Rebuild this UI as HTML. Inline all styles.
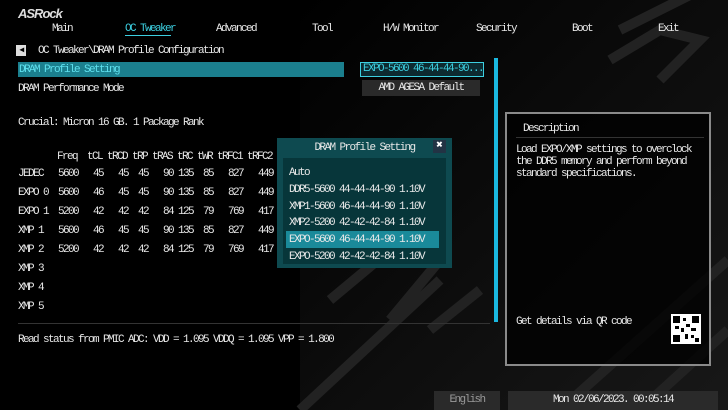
<!DOCTYPE html><html><head><style>
body{margin:0;width:728px;height:410px;background:#000;overflow:hidden;position:relative;font-family:"Liberation Mono",monospace;font-size:11px;letter-spacing:-1.6px;color:#e8e8e8}
.a{position:absolute;white-space:pre;line-height:12px}
.c{color:#3ccfe0}
</style></head><body>
<svg class="a" style="left:0;top:0" width="728" height="410">
<defs><linearGradient id="g" x1="0" y1="0" x2="1" y2="1"><stop offset="0" stop-color="#000"/><stop offset="1" stop-color="#1e1e1e"/></linearGradient></defs>
<rect x="300" y="0" width="428" height="410" fill="url(#g)" opacity=".8"/>
<g fill="none" stroke="#222" stroke-width="10">
<path d="M620 30 L700 -10 M610 60 L660 30 L700 40 L660 80"/>
<path d="M300 410 L440 280 M330 300 L390 250 L440 260 L390 320 M430 330 L480 290"/>
<path d="M560 410 L728 260 M640 410 L728 330"/>
</g>
</svg>
<div class="a" style="left:18px;top:6px;font:italic bold 13px 'Liberation Sans',sans-serif;letter-spacing:-1px;color:#ddd">ASRock</div>
<div class="a" style="left:52px;top:23px">Main</div>
<div class="a c" style="left:125px;top:23px">OC Tweaker</div>
<div class="a" style="left:125px;top:35px;width:46px;height:1px;background:#3ccfe0"></div>
<div class="a" style="left:216px;top:23px">Advanced</div>
<div class="a" style="left:312px;top:23px">Tool</div>
<div class="a" style="left:383px;top:23px">H/W Monitor</div>
<div class="a" style="left:476px;top:23px">Security</div>
<div class="a" style="left:572px;top:23px">Boot</div>
<div class="a" style="left:658px;top:23px">Exit</div>
<div class="a" style="left:16px;top:45px;width:10px;height:11px;background:#ddd;color:#000;font-size:8px;line-height:11px;text-align:center">◀</div>
<div class="a" style="left:38px;top:45px">OC Tweaker\DRAM Profile Configuration</div>
<div class="a" style="left:18px;top:62px;width:326px;height:15px;background:#1b7f8e"></div>
<div class="a c" style="left:19px;top:64px;color:#5ee0ee">DRAM Profile Setting</div>
<div class="a" style="left:360px;top:62px;width:122px;height:13px;background:#0d2a30;border:1px solid #3ccfe0"></div>
<div class="a c" style="left:363px;top:63px">EXPO-5600 46-44-44-90...</div>
<div class="a" style="left:18px;top:83px">DRAM Performance Mode</div>
<div class="a" style="left:362px;top:80px;width:118px;height:16px;background:#2a2a2a;text-align:center;line-height:16px">AMD AGESA Default</div>
<div class="a" style="left:494px;top:58px;width:4px;height:264px;background:#1ab8e0"></div>
<div class="a" style="left:18px;top:117px">Crucial: Micron 16 GB. 1 Package Rank</div>
<div class="a" style="left:57px;top:151px">Freq  tCL tRCD tRP tRAS tRC tWR tRFC1 tRFC2 tRFCsb</div>
<div class="a" style="left:18px;top:168px">JEDEC   5600   45   45  45   90 135  85   827   449</div>
<div class="a" style="left:18px;top:187px">EXPO 0  5600   46   45  45   90 135  85   827   449</div>
<div class="a" style="left:18px;top:206px">EXPO 1  5200   42   42  42   84 125  79   769   417</div>
<div class="a" style="left:18px;top:225px">XMP 1   5600   46   45  45   90 135  85   827   449</div>
<div class="a" style="left:18px;top:244px">XMP 2   5200   42   42  42   84 125  79   769   417</div>
<div class="a" style="left:18px;top:263px">XMP 3</div>
<div class="a" style="left:18px;top:282px">XMP 4</div>
<div class="a" style="left:18px;top:301px">XMP 5</div>
<div class="a" style="left:18px;top:323px;width:472px;height:1px;background:#333"></div>
<div class="a" style="left:18px;top:334px">Read status from PMIC ADC: VDD = 1.095 VDDQ = 1.095 VPP = 1.800</div>
<div class="a" style="left:277px;top:138px;width:175px;height:130px;background:#0e4a50"></div>
<div class="a" style="left:283px;top:158px;width:163px;height:106px;background:#07363a"></div>
<div class="a" style="left:277px;top:142px;width:175px;text-align:center">DRAM Profile Setting</div>
<div class="a" style="left:433px;top:140px;width:13px;height:13px;background:#234;color:#fff;text-align:center;line-height:13px;font-weight:bold;letter-spacing:0">✖</div>
<div class="a" style="left:286px;top:231px;width:153px;height:17px;background:#1a8a9a"></div>
<div class="a" style="left:289px;top:167px">Auto</div>
<div class="a" style="left:289px;top:184px">DDR5-5600 44-44-44-90 1.10V</div>
<div class="a" style="left:289px;top:201px">XMP1-5600 46-44-44-90 1.10V</div>
<div class="a" style="left:289px;top:217px">XMP2-5200 42-42-42-84 1.10V</div>
<div class="a" style="left:289px;top:234px">EXPO-5600 46-44-44-90 1.10V</div>
<div class="a" style="left:289px;top:251px">EXPO-5200 42-42-42-84 1.10V</div>
<div class="a" style="left:505px;top:112px;width:202px;height:250px;border:2px solid #8a8a8a;background:rgba(0,0,0,.75)"></div>
<div class="a" style="left:516px;top:137px;width:188px;height:1px;background:#333"></div>
<div class="a" style="left:523px;top:123px">Description</div>
<div class="a" style="left:516px;top:144px">Load EXPO/XMP settings to overclock
the DDR5 memory and perform beyond
standard specifications.</div>
<div class="a" style="left:516px;top:316px">Get details via QR code</div>
<svg class="a" style="left:671px;top:314px" width="30" height="30"><rect width="30" height="30" fill="#fff"/><g fill="#000"><rect x="2" y="2" width="7" height="7"/><rect x="21" y="2" width="7" height="7"/><rect x="2" y="21" width="7" height="7"/><rect x="12" y="4" width="3" height="3"/><rect x="15" y="10" width="4" height="3"/><rect x="10" y="14" width="3" height="4"/><rect x="20" y="14" width="5" height="3"/><rect x="14" y="20" width="3" height="5"/><rect x="20" y="21" width="3" height="3"/><rect x="24" y="24" width="4" height="4"/><rect x="4" y="12" width="4" height="3"/></g></svg>
<div class="a" style="left:434px;top:391px;width:66px;height:19px;background:#2a2a2a;color:#999;text-align:center;line-height:19px">English</div>
<div class="a" style="left:508px;top:391px;width:210px;height:19px;background:#2a2a2a;text-align:center;line-height:19px">Mon 02/06/2023. 00:05:14</div>
</body></html>
